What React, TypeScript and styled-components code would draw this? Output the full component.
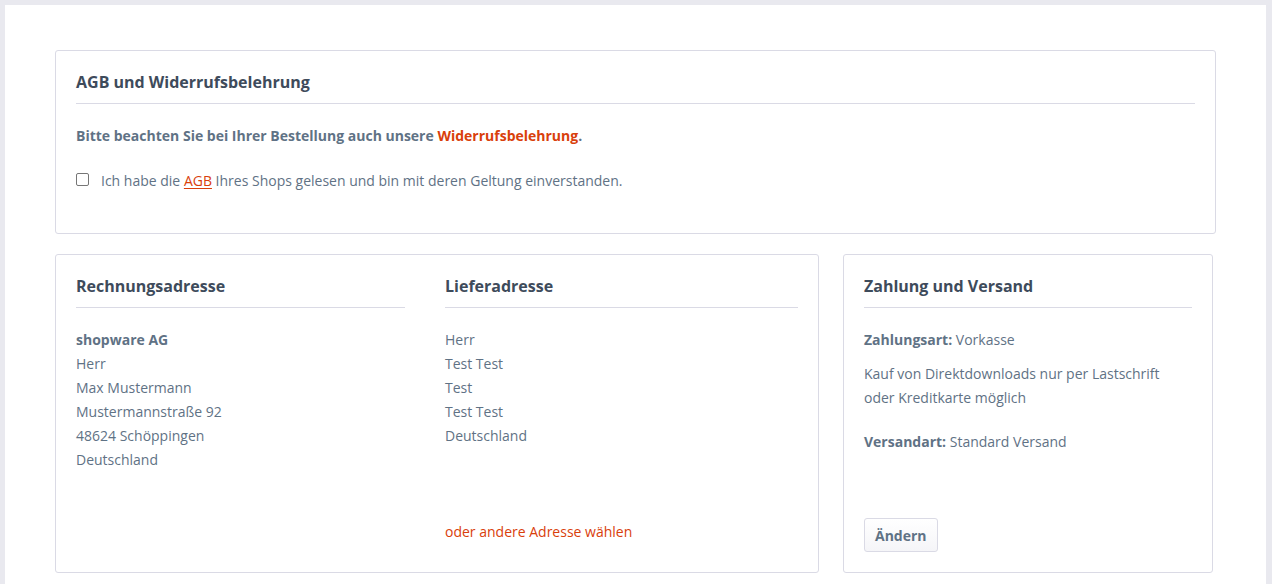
import React from "react";
import styled, { createGlobalStyle } from "styled-components";

const Global = createGlobalStyle`
  html, body { margin: 0; padding: 0; background: #e9e9ef; }
  body { font-family: "Open Sans", "Noto Sans", sans-serif; color: #5f7285; }
  * { box-sizing: border-box; }
`;

const Page = styled.div`
  padding: 5px 6px 0 5px;
  min-height: 584px;
`;

const Content = styled.div`
  background: #fff;
  padding: 45px 50px 20px 50px;
  min-height: 579px;
  display: flex;
  flex-direction: column;
  gap: 20px;
`;

const Panel = styled.div`
  border: 1px solid #dadae5;
  border-radius: 3px;
  background: #fff;
  padding: 20px;
  display: flex;
  flex-direction: column;
`;

const Title = styled.h3`
  margin: 0 0 20px 0;
  font-size: 16px;
  font-weight: 700;
  line-height: 22px;
  color: #3e4b5b;
  padding: 0 0 10px 0;
  border-bottom: 1px solid #dadae5;
`;

const Notice = styled.p`
  margin: 0 0 21px 0;
  font-size: 14px;
  font-weight: 700;
  line-height: 24px;
`;

const RedLink = styled.a<{ $underline?: boolean }>`
  color: #d9400b;
  text-decoration: ${(p) => (p.$underline ? "underline" : "none")};
  text-underline-offset: 2px;
`;

const CheckRow = styled.label`
  display: flex;
  align-items: center;
  gap: 12px;
  font-size: 14px;
  line-height: 24px;
  margin-bottom: 20px;
`;

const Box = styled.span`
  width: 13px;
  height: 13px;
  border: 1px solid #767676;
  border-radius: 2px;
  margin-top: -3px;
  flex: none;
`;

const Row = styled.div`
  display: flex;
  gap: 24px;
  padding-right: 3px;
`;

const AddressPanel = styled(Panel)`
  flex: 0 0 764px;
  display: grid;
  grid-template-columns: 329px 1fr;
  column-gap: 40px;
  padding: 20px 20px 28px 20px;
  min-height: 319px;
`;

const Column = styled.div`
  display: flex;
  flex-direction: column;
`;

const Lines = styled.div`
  font-size: 14px;
  line-height: 24px;
`;

const Strong = styled.strong`
  font-weight: 700;
  display: block;
`;

const Spacer = styled.div`
  flex: 1;
`;

const PayPanel = styled(Panel)`
  flex: 1;
  min-height: 319px;
`;

const Para = styled.p<{ $mb?: number }>`
  margin: 0 0 ${(p) => p.$mb ?? 10}px 0;
  font-size: 14px;
  line-height: 24px;
`;

const Label = styled.b`
  font-weight: 700;
`;

const Button = styled.button`
  align-self: flex-start;
  font-family: "Open Sans", sans-serif;
  font-size: 14px;
  font-weight: 700;
  color: #5f7285;
  background: linear-gradient(#fff, #f5f5f8);
  border: 1px solid #dadae5;
  border-radius: 3px;
  height: 34px;
  padding: 0 10px;
`;

export default function App() {
  return (
    <>
      <Global />
      <Page>
        <Content>
          <Panel>
            <Title>AGB und Widerrufsbelehrung</Title>
            <Notice>
              Bitte beachten Sie bei Ihrer Bestellung auch unsere{" "}
              <RedLink>Widerrufsbelehrung</RedLink>.
            </Notice>
            <CheckRow>
              <Box />
              <span>
                Ich habe die <RedLink $underline>AGB</RedLink> Ihres Shops gelesen und bin mit deren Geltung einverstanden.
              </span>
            </CheckRow>
          </Panel>
          <Row>
            <AddressPanel>
              <Column>
                <Title>Rechnungsadresse</Title>
                <Lines>
                  <Strong>shopware AG</Strong>
                  Herr<br />
                  Max Mustermann<br />
                  Mustermannstraße 92<br />
                  48624 Schöppingen<br />
                  Deutschland
                </Lines>
              </Column>
              <Column>
                <Title>Lieferadresse</Title>
                <Lines>
                  Herr<br />
                  Test Test<br />
                  Test<br />
                  Test Test<br />
                  Deutschland
                </Lines>
                <Spacer />
                <Lines>
                  <RedLink>oder andere Adresse wählen</RedLink>
                </Lines>
              </Column>
            </AddressPanel>
            <PayPanel>
              <Title>Zahlung und Versand</Title>
              <Para>
                <Label>Zahlungsart:</Label> Vorkasse
              </Para>
              <Para $mb={20}>
                Kauf von Direktdownloads nur per Lastschrift oder Kreditkarte möglich
              </Para>
              <Para>
                <Label>Versandart:</Label> Standard Versand
              </Para>
              <Spacer />
              <Button>Ändern</Button>
            </PayPanel>
          </Row>
        </Content>
      </Page>
    </>
  );
}
